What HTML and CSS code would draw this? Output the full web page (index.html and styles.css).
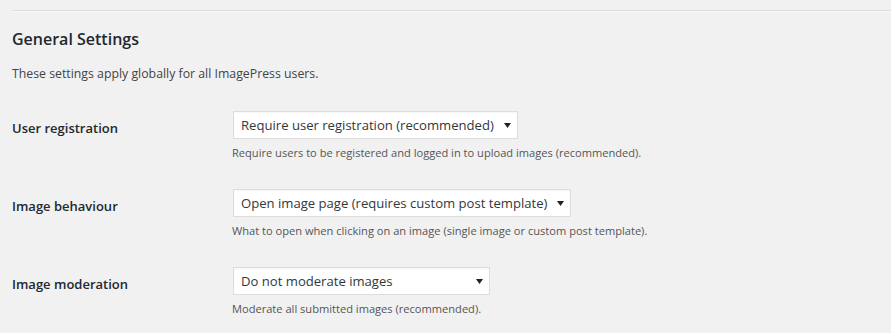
FILE: index.html
```html
<!DOCTYPE html>
<html lang="en">
<head>
    <meta charset="UTF-8">
    <meta name="viewport" content="width=device-width, initial-scale=1.0">
    <title>ImagePress - General Settings</title>
    <link rel="stylesheet" href="styles.css">
</head>
<body>
    <div class="wrap">
        <hr class="divider">

        <h2 class="section-title">General Settings</h2>
        <p class="section-intro">These settings apply globally for all ImagePress users.</p>

        <!-- строки настроек -->
        <div class="form-row">
            <div class="form-label">User registration</div>
            <div class="form-field">
                <div class="select-box">
                    <span class="select-text">Require user registration (recommended)</span>
                    <svg class="select-arrow" width="7" height="5" viewBox="0 0 7 5"><path d="M0 0h7L3.5 5z" fill="#222"/></svg>
                </div>
                <p class="description">Require users to be registered and logged in to upload images (recommended).</p>
            </div>
        </div>

        <div class="form-row">
            <div class="form-label">Image behaviour</div>
            <div class="form-field">
                <div class="select-box">
                    <span class="select-text">Open image page (requires custom post template)</span>
                    <svg class="select-arrow" width="7" height="5" viewBox="0 0 7 5"><path d="M0 0h7L3.5 5z" fill="#222"/></svg>
                </div>
                <p class="description">What to open when clicking on an image (single image or custom post template).</p>
            </div>
        </div>

        <div class="form-row">
            <div class="form-label">Image moderation</div>
            <div class="form-field">
                <div class="select-box select-wide">
                    <span class="select-text">Do not moderate images</span>
                    <svg class="select-arrow" width="7" height="5" viewBox="0 0 7 5"><path d="M0 0h7L3.5 5z" fill="#222"/></svg>
                </div>
                <p class="description">Moderate all submitted images (recommended).</p>
            </div>
        </div>
    </div>
</body>
</html>
```

FILE: styles.css
```css
/* стиль страницы настроек */
body {
    margin: 0;
    background-color: #f1f1f1;
    color: #444;
    font-family: "Open Sans", "Noto Sans", sans-serif;
    font-size: 13px;
    line-height: 1.4;
}

.wrap {
    padding: 10px 0 0 12px;
}

.divider {
    margin: 0;
    border: none;
    border-top: 1px solid #ddd;
    border-bottom: 1px solid #fafafa;
}

.section-title {
    margin: 15px 0 0;
    font-size: 16px;
    font-weight: 600;
    color: #23282d;
    line-height: 24px;
}

.section-intro {
    margin: 14px 0 11px;
    font-size: 12.3px;
    line-height: 18px;
}

.form-row {
    display: flex;
    padding-top: 16px;
    height: 62px;
}

.form-label {
    width: 210px;
    padding-top: 9px;
    font-size: 13px;
    font-weight: 600;
    color: #23282d;
}

.form-field {
    padding-left: 10px;
}

.select-box {
    display: inline-flex;
    align-items: center;
    height: 26px;
    margin: 1px;
    padding: 0 6px 0 7px;
    background-color: #fff;
    border: 1px solid #ddd;
    box-shadow: inset 0 1px 2px rgba(0, 0, 0, 0.04);
    color: #32373c;
    font-size: 13.1px;
}

.select-wide {
    width: 242px;
}

.select-text {
    flex: 1;
    white-space: nowrap;
}

.select-arrow {
    margin-left: 10px;
}

.description {
    margin: 5px 0 0;
    font-size: 11.1px;
    color: #555;
}
```
